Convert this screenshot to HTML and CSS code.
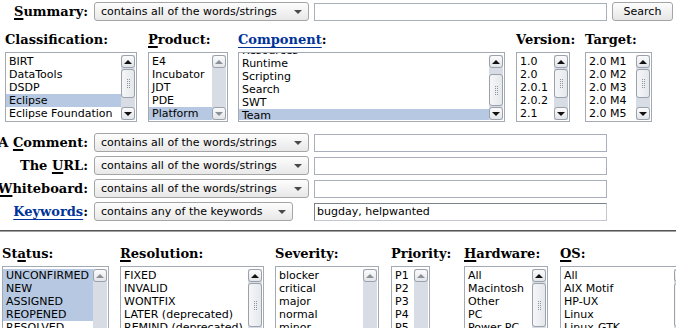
FILE: index.html
```html
<!DOCTYPE html>
<html lang="en">
<head>
    <meta charset="UTF-8">
    <title>Search for bugs</title>
    <link rel="stylesheet" href="styles.css">
</head>
<body>
    <div class="summary-row">
        <div class="row-label"><span><u>S</u>ummary:</span></div>
        <div class="select-cell">
            <div class="dropdown">contains all of the words/strings<span class="caret"></span></div>
        </div>
        <input type="text" class="text-input">
        <button class="btn">Search</button>
    </div>

    <div class="lists top-lists">
        <div class="col col-classification">
            <div class="col-label">Classification:</div>
            <div class="listbox lb-classification">
                <div class="options">
                    <div class="opt">BIRT</div>
                    <div class="opt">DataTools</div>
                    <div class="opt">DSDP</div>
                    <div class="opt sel">Eclipse</div>
                    <div class="opt">Eclipse Foundation</div>
                </div>
                <div class="scrollbar">
                    <div class="sb-btn"><span class="tri-up"></span></div>
                    <div class="sb-track"><div class="sb-thumb"><span class="grip"></span></div></div>
                    <div class="sb-btn"><span class="tri-down"></span></div>
                </div>
            </div>
        </div>
        <div class="col col-product">
            <div class="col-label"><u>P</u>roduct:</div>
            <div class="listbox lb-product">
                <div class="options">
                    <div class="opt">E4</div>
                    <div class="opt">Incubator</div>
                    <div class="opt">JDT</div>
                    <div class="opt">PDE</div>
                    <div class="opt sel">Platform</div>
                </div>
                <div class="scrollbar disabled">
                    <div class="sb-btn"><span class="tri-up"></span></div>
                    <div class="sb-track"></div>
                    <div class="sb-btn"><span class="tri-down"></span></div>
                </div>
            </div>
        </div>
        <div class="col col-component">
            <div class="col-label"><a href="#">Component</a>:</div>
            <div class="listbox lb-component">
                <div class="options">
                    <div class="opt scrolled-off">Resources</div>
                    <div class="opt">Runtime</div>
                    <div class="opt">Scripting</div>
                    <div class="opt">Search</div>
                    <div class="opt">SWT</div>
                    <div class="opt sel">Team</div>
                </div>
                <div class="scrollbar">
                    <div class="sb-btn"><span class="tri-up"></span></div>
                    <div class="sb-track"><div class="sb-thumb long"><span class="grip"></span></div></div>
                    <div class="sb-btn"><span class="tri-down"></span></div>
                </div>
            </div>
        </div>
        <div class="col col-version">
            <div class="col-label">Version:</div>
            <div class="listbox lb-version">
                <div class="options">
                    <div class="opt">1.0</div>
                    <div class="opt">2.0</div>
                    <div class="opt">2.0.1</div>
                    <div class="opt">2.0.2</div>
                    <div class="opt">2.1</div>
                </div>
                <div class="scrollbar">
                    <div class="sb-btn"><span class="tri-up"></span></div>
                    <div class="sb-track"><div class="sb-thumb"><span class="grip"></span></div></div>
                    <div class="sb-btn"><span class="tri-down"></span></div>
                </div>
            </div>
        </div>
        <div class="col col-target">
            <div class="col-label">Target:</div>
            <div class="listbox lb-target">
                <div class="options">
                    <div class="opt">2.0 M1</div>
                    <div class="opt">2.0 M2</div>
                    <div class="opt">2.0 M3</div>
                    <div class="opt">2.0 M4</div>
                    <div class="opt">2.0 M5</div>
                </div>
                <div class="scrollbar">
                    <div class="sb-btn"><span class="tri-up"></span></div>
                    <div class="sb-track"><div class="sb-thumb"><span class="grip"></span></div></div>
                    <div class="sb-btn"><span class="tri-down"></span></div>
                </div>
            </div>
        </div>
    </div>

    <div class="text-rows">
        <div class="text-row">
            <div class="row-label"><span>A <u>C</u>omment:</span></div>
            <div class="select-cell">
                <div class="dropdown">contains all of the words/strings<span class="caret"></span></div>
            </div>
            <input type="text" class="text-input">
        </div>
        <div class="text-row">
            <div class="row-label"><span>The <u>U</u>RL:</span></div>
            <div class="select-cell">
                <div class="dropdown">contains all of the words/strings<span class="caret"></span></div>
            </div>
            <input type="text" class="text-input">
        </div>
        <div class="text-row">
            <div class="row-label"><span><u>W</u>hiteboard:</span></div>
            <div class="select-cell">
                <div class="dropdown">contains all of the words/strings<span class="caret"></span></div>
            </div>
            <input type="text" class="text-input">
        </div>
        <div class="text-row">
            <div class="row-label"><span><a href="#">Keywords</a>:</span></div>
            <div class="select-cell">
                <div class="dropdown short">contains any of the keywords<span class="caret"></span></div>
            </div>
            <input type="text" class="text-input keywords" value="bugday, helpwanted">
        </div>
    </div>

    <hr class="divider">

    <div class="lists bottom-lists">
        <div class="col col-status">
            <div class="col-label">St<u>a</u>tus:</div>
            <div class="listbox tall lb-status">
                <div class="options">
                    <div class="opt sel">UNCONFIRMED</div>
                    <div class="opt sel">NEW</div>
                    <div class="opt sel">ASSIGNED</div>
                    <div class="opt sel">REOPENED</div>
                    <div class="opt">RESOLVED</div>
                    <div class="opt">VERIFIED</div>
                    <div class="opt">CLOSED</div>
                </div>
                <div class="scrollbar disabled">
                    <div class="sb-btn"><span class="tri-up"></span></div>
                    <div class="sb-track"></div>
                    <div class="sb-btn"><span class="tri-down"></span></div>
                </div>
            </div>
        </div>
        <div class="col col-resolution">
            <div class="col-label"><u>R</u>esolution:</div>
            <div class="listbox tall lb-resolution">
                <div class="options">
                    <div class="opt">FIXED</div>
                    <div class="opt">INVALID</div>
                    <div class="opt">WONTFIX</div>
                    <div class="opt">LATER (deprecated)</div>
                    <div class="opt">REMIND (deprecated)</div>
                    <div class="opt">DUPLICATE</div>
                    <div class="opt">WORKSFORME</div>
                </div>
                <div class="scrollbar">
                    <div class="sb-btn"><span class="tri-up"></span></div>
                    <div class="sb-track"><div class="sb-thumb tall-thumb"><span class="grip"></span></div></div>
                    <div class="sb-btn"><span class="tri-down"></span></div>
                </div>
            </div>
        </div>
        <div class="col col-severity">
            <div class="col-label">Severity:</div>
            <div class="listbox tall lb-severity">
                <div class="options">
                    <div class="opt">blocker</div>
                    <div class="opt">critical</div>
                    <div class="opt">major</div>
                    <div class="opt">normal</div>
                    <div class="opt">minor</div>
                    <div class="opt">trivial</div>
                    <div class="opt">enhancement</div>
                </div>
                <div class="scrollbar disabled">
                    <div class="sb-btn"><span class="tri-up"></span></div>
                    <div class="sb-track"></div>
                    <div class="sb-btn"><span class="tri-down"></span></div>
                </div>
            </div>
        </div>
        <div class="col col-priority">
            <div class="col-label">Pr<u>i</u>ority:</div>
            <div class="listbox tall lb-priority">
                <div class="options">
                    <div class="opt">P1</div>
                    <div class="opt">P2</div>
                    <div class="opt">P3</div>
                    <div class="opt">P4</div>
                    <div class="opt">P5</div>
                </div>
                <div class="scrollbar disabled">
                    <div class="sb-btn"><span class="tri-up"></span></div>
                    <div class="sb-track"></div>
                    <div class="sb-btn"><span class="tri-down"></span></div>
                </div>
            </div>
        </div>
        <div class="col col-hardware">
            <div class="col-label"><u>H</u>ardware:</div>
            <div class="listbox tall lb-hardware">
                <div class="options">
                    <div class="opt">All</div>
                    <div class="opt">Macintosh</div>
                    <div class="opt">Other</div>
                    <div class="opt">PC</div>
                    <div class="opt">Power PC</div>
                    <div class="opt">Sun</div>
                    <div class="opt">Spark</div>
                </div>
                <div class="scrollbar">
                    <div class="sb-btn"><span class="tri-up"></span></div>
                    <div class="sb-track"><div class="sb-thumb tall-thumb"><span class="grip"></span></div></div>
                    <div class="sb-btn"><span class="tri-down"></span></div>
                </div>
            </div>
        </div>
        <div class="col col-os">
            <div class="col-label"><u>O</u>S:</div>
            <div class="listbox tall lb-os">
                <div class="options">
                    <div class="opt">All</div>
                    <div class="opt">AIX Motif</div>
                    <div class="opt">HP-UX</div>
                    <div class="opt">Linux</div>
                    <div class="opt">Linux-GTK</div>
                    <div class="opt">Linux-Motif</div>
                    <div class="opt">Mac OS X</div>
                </div>
                <div class="scrollbar">
                    <div class="sb-btn"><span class="tri-up"></span></div>
                    <div class="sb-track"><div class="sb-thumb tall-thumb"><span class="grip"></span></div></div>
                    <div class="sb-btn"><span class="tri-down"></span></div>
                </div>
            </div>
        </div>
    </div>
</body>
</html>
```

FILE: styles.css
```css
html, body {
    margin: 0;
    overflow: hidden;
    background-color: #fff;
}
body {
    font-family: "DejaVu Sans", sans-serif;
    font-size: 11px;
    color: #000;
}
a {
    color: #039;
    text-decoration-thickness: 1px;
    text-underline-offset: 3px;
}
u {
    text-decoration-thickness: 2px;
    text-underline-offset: 2px;
}

/* label + select + text field rows */
.summary-row, .text-row {
    display: flex;
    align-items: center;
    height: 19px;
}
.summary-row {
    margin-top: 2px;
}
.text-rows {
    margin-top: 11px;
    display: flex;
    flex-direction: column;
    gap: 4px;
}
.row-label {
    width: 88px;
    flex: none;
    display: flex;
    justify-content: flex-end;
    margin-right: 6px;
    font-family: "DejaVu Serif", serif;
    font-weight: bold;
    font-size: 13px;
    white-space: nowrap;
}
.select-cell {
    width: 215px;
    flex: none;
}
.dropdown {
    box-sizing: border-box;
    width: 215px;
    height: 19px;
    padding: 0 6px;
    border: 1px solid #a5a5a5;
    border-radius: 3px;
    background: linear-gradient(#fdfdfd, #e8e8e8);
    display: flex;
    align-items: center;
    justify-content: space-between;
    white-space: nowrap;
}
.dropdown.short {
    width: 199px;
}
.caret {
    width: 0;
    height: 0;
    border-left: 4px solid transparent;
    border-right: 4px solid transparent;
    border-top: 4px solid #4a4a4a;
}
.text-input {
    box-sizing: border-box;
    width: 293px;
    height: 18px;
    margin: 0 0 0 5px;
    padding: 0 2px;
    border: 1px solid #a9b0bb;
    font-family: "DejaVu Sans", sans-serif;
    font-size: 11px;
    color: #000;
    flex: none;
}
.text-input.keywords {
    border-color: #7d8288 #c4c8ce #c4c8ce #7d8288;
}
.btn {
    box-sizing: border-box;
    width: 61px;
    height: 19px;
    margin-left: 5px;
    padding: 0;
    border: 1px solid #a5a5a5;
    border-radius: 3px;
    background: linear-gradient(#fdfdfd, #e6e6e6);
    font-family: "DejaVu Sans", sans-serif;
    font-size: 11px;
    color: #000;
}

/* columns of list boxes */
.lists {
    display: flex;
}
.top-lists {
    margin-top: 11px;
    padding-left: 5px;
}
.bottom-lists {
    margin-top: 14px;
    padding-left: 2px;
}
.col {
    flex: none;
}
.col-label {
    height: 16px;
    line-height: 16px;
    margin-bottom: 4px;
    font-family: "DejaVu Serif", serif;
    font-weight: bold;
    font-size: 13px;
    white-space: nowrap;
}
.col-classification { width: 143px; }
.col-product { width: 90px; }
.col-component { width: 278px; }
.col-version { width: 69px; }
.col-target { width: 80px; }
.col-status { width: 118px; }
.col-resolution { width: 155px; }
.col-severity { width: 116px; }
.col-priority { width: 73px; }
.col-hardware { width: 96px; }
.col-os { width: 140px; }

.lb-classification { width: 132px; }
.lb-product { width: 80px; }
.lb-component { width: 267px; }
.lb-version { width: 54px; }
.lb-target { width: 67px; }
.lb-status { width: 107px; }
.lb-resolution { width: 144px; }
.lb-severity { width: 104px; }
.lb-priority { width: 39px; }
.lb-hardware { width: 84px; }
.lb-os { width: 130px; }

.listbox {
    box-sizing: border-box;
    height: 70px;
    padding: 2px 1px 1px 0;
    border: 1px solid #a3aab4;
    background-color: #fff;
    display: flex;
}
.listbox.tall {
    height: 96px;
}
.options {
    flex: 1;
    min-width: 0;
    overflow: hidden;
}
.opt {
    height: 13px;
    line-height: 13px;
    padding-left: 3px;
    white-space: nowrap;
}
.opt.sel {
    background-color: #b6c8e2;
}
/* component list is scrolled to its end */
.lb-component .options {
    margin-top: -2px;
}
.opt.scrolled-off {
    margin-top: -9px;
}

/* gtk style scrollbar */
.scrollbar {
    width: 14px;
    flex: none;
    display: flex;
    flex-direction: column;
    background-color: #d8dde5;
}
.sb-btn {
    box-sizing: border-box;
    height: 13px;
    border: 1px solid #9aa1aa;
    border-radius: 3px;
    background: linear-gradient(#fbfbfc, #e2e5e9);
    display: flex;
    align-items: center;
    justify-content: center;
}
.tri-up {
    border-left: 4px solid transparent;
    border-right: 4px solid transparent;
    border-bottom: 4px solid #111;
}
.tri-down {
    border-left: 4px solid transparent;
    border-right: 4px solid transparent;
    border-top: 4px solid #111;
}
.disabled .tri-up { border-bottom-color: #8c9199; }
.disabled .tri-down { border-top-color: #8c9199; }
.sb-track {
    flex: 1;
    display: flex;
    flex-direction: column;
    padding: 1px 0;
}
.sb-thumb {
    box-sizing: border-box;
    height: 29px;
    border: 1px solid #9aa1aa;
    border-radius: 3px;
    background: linear-gradient(90deg, #f5f6f8, #e5e8ec);
    display: flex;
    align-items: center;
    justify-content: center;
}
.sb-thumb.long {
    height: 32px;
    margin-top: auto;
}
.sb-thumb.tall-thumb {
    height: 44px;
}
.grip {
    width: 1px;
    height: 9px;
    border-left: 1px dotted #8e959e;
    border-right: 1px dotted #8e959e;
}

.divider {
    margin: 9px 0 0 0;
    height: 0;
    border: none;
    border-top: 1px solid #555;
    border-bottom: 1px solid #a0a0a0;
}
```
